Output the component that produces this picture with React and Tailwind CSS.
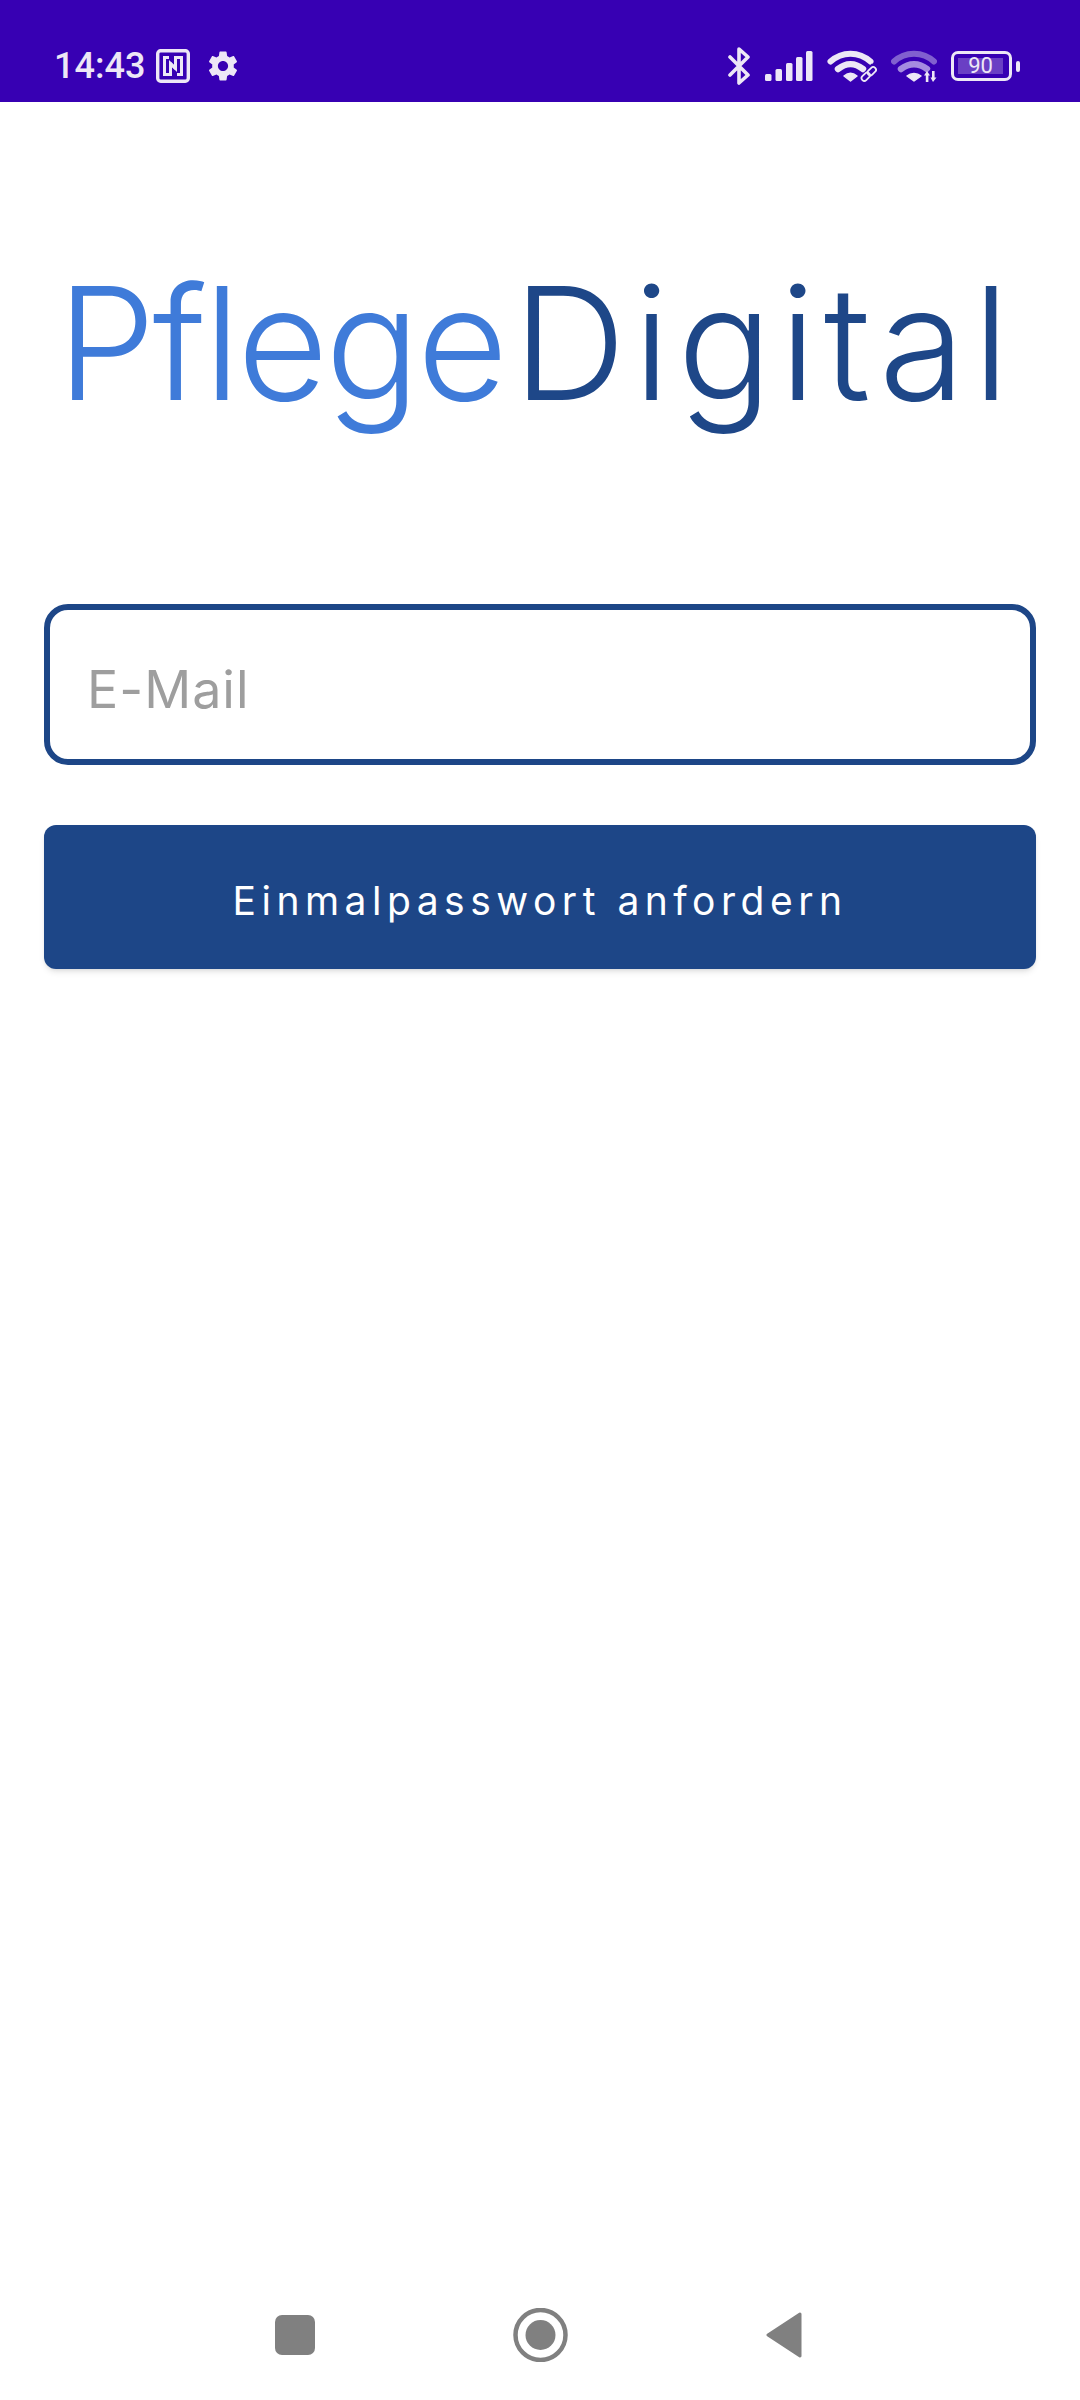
const statusColor = "#ede7f6";

function NfcIcon() {
    return (
        <svg width="34" height="34" viewBox="0 0 34 34" fill="none" stroke={statusColor} strokeWidth="3.4">
            <rect x="1.7" y="1.7" width="30.6" height="30.6" rx="3" />
            <path d="M13 8.5H8.5V25.5H14.5V14.5L20 20" strokeWidth="3" />
            <path d="M21 25.5H25.5V8.5H19.5V19.5L14 14" strokeWidth="3" />
        </svg>
    );
}

function GearIcon() {
    return (
        <svg width="36" height="36" viewBox="0 0 24 24" fill={statusColor}>
            <path d="M19.14 12.94c.04-.3.06-.61.06-.94 0-.32-.02-.64-.07-.94l2.03-1.58c.18-.14.23-.41.12-.61l-1.92-3.32c-.12-.22-.37-.29-.59-.22l-2.39.96c-.5-.38-1.03-.7-1.62-.94l-.36-2.54c-.04-.24-.24-.41-.48-.41h-3.84c-.24 0-.43.17-.47.41l-.36 2.54c-.59.24-1.13.57-1.62.94l-2.39-.96c-.22-.08-.47 0-.59.22L2.74 8.87c-.12.21-.08.47.12.61l2.03 1.58c-.05.3-.09.63-.09.94s.02.64.07.94l-2.03 1.58c-.18.14-.23.41-.12.61l1.92 3.32c.12.22.37.29.59.22l2.39-.96c.5.38 1.03.7 1.62.94l.36 2.54c.05.24.24.41.48.41h3.84c.24 0 .44-.17.47-.41l.36-2.54c.59-.24 1.13-.56 1.62-.94l2.39.96c.22.08.47 0 .59-.22l1.92-3.32c.12-.22.07-.47-.12-.61l-2.01-1.58zM12 15.4c-1.87 0-3.4-1.53-3.4-3.4s1.53-3.4 3.4-3.4 3.4 1.53 3.4 3.4-1.53 3.4-3.4 3.4z" />
        </svg>
    );
}

function BluetoothIcon() {
    return (
        <svg width="24" height="38" viewBox="0 0 24 38" fill="none" stroke={statusColor} strokeWidth="3.6" strokeLinecap="round" strokeLinejoin="round">
            <path d="M3 10 21 28 12 36V2L21 10 3 28" />
        </svg>
    );
}

function SignalIcon() {
    const bars = [
        { x: 0, y: 23 },
        { x: 10.5, y: 18 },
        { x: 21, y: 12 },
        { x: 31, y: 6 },
        { x: 41, y: 0 },
    ];
    return (
        <svg width="48" height="30" viewBox="0 0 48 30" fill={statusColor}>
            {bars.map((b) => (
                <rect key={b.x} x={b.x} y={b.y} width="6.5" height={30 - b.y} rx="1.5" />
            ))}
        </svg>
    );
}

function WifiLinkIcon() {
    return (
        <svg width="50" height="34" viewBox="0 0 50 34" fill="none">
            <path d="M3.5 12.5C15 2 32 2 43.5 12.5" stroke={statusColor} strokeWidth="6" strokeLinecap="round" />
            <path d="M11 20C19 13.5 28 13.5 36 20" stroke={statusColor} strokeWidth="6.5" strokeLinecap="round" />
            <path d="M23.5 32 17 27C21 23.5 26 23.5 30 27Z" fill={statusColor} stroke={statusColor} strokeWidth="1.5" strokeLinejoin="round" />
            <path d="M35 34 49 18" stroke="#3700b3" strokeWidth="11" />
            <g stroke={statusColor} strokeWidth="1.8" fill="none">
                <rect x="34" y="25" width="9.5" height="5.5" rx="2.7" transform="rotate(-45 38.7 27.7)" />
                <rect x="40" y="19.5" width="9.5" height="5.5" rx="2.7" transform="rotate(-45 44.7 22.2)" />
            </g>
        </svg>
    );
}

function WifiDataIcon() {
    return (
        <svg width="46" height="35" viewBox="0 0 46 35" fill="none">
            <path d="M3 12.5C14 2 32 2 43 12.5" stroke="#8160cf" strokeWidth="6" strokeLinecap="round" />
            <path d="M10 20C18 13.5 28 13.5 36 20" stroke="#a58be0" strokeWidth="6.5" strokeLinecap="round" />
            <path d="M23 32 16 27C20 23.5 26 23.5 30 27Z" fill={statusColor} stroke={statusColor} strokeWidth="1.5" strokeLinejoin="round" />
            <path d="M33 34 47 20" stroke="#3700b3" strokeWidth="10" />
            <path d="M36 22 39 26.5H37.4V33H34.8V26.5H33Z" fill={statusColor} />
            <path d="M42 33 39.5 28.5H41V22H43.6V28.5H45.5Z" fill={statusColor} />
        </svg>
    );
}

function BatteryIcon() {
    return (
        <div className="flex items-center gap-[4px]">
            <div className="h-[30px] w-[61px] rounded-[7px] border-[3px] border-[#ede7f6] p-[4px]">
                <div className="flex h-full w-[45px] items-center justify-center bg-[#6a3fc4] font-['Roboto',sans-serif] text-[22px] leading-none text-[#ede7f6]">
                    90
                </div>
            </div>
            <div className="h-[11px] w-[4px] rounded-[2px] bg-[#ede7f6]" />
        </div>
    );
}

function StatusBar() {
    return (
        <div className="flex h-[102px] items-center justify-between bg-[#3700b3] pl-[54px] pr-[60px] pt-[30px]">
            <div className="flex items-center">
                <span className="font-['Roboto',sans-serif] text-[36px] font-medium leading-none text-[#ede7f6]">14:43</span>
                <div className="ml-[11px]">
                    <NfcIcon />
                </div>
                <div className="ml-[15px]">
                    <GearIcon />
                </div>
            </div>
            <div className="flex items-center gap-[14px]">
                <BluetoothIcon />
                <SignalIcon />
                <WifiLinkIcon />
                <WifiDataIcon />
                <BatteryIcon />
            </div>
        </div>
    );
}

function NavBar() {
    return (
        <div className="flex h-[130px] items-center gap-[198px] pl-[275px]">
            <div className="h-[40px] w-[40px] rounded-[7px] bg-[#808080]" />
            <svg width="55" height="54" viewBox="0 0 55 54">
                <circle cx="27.5" cy="27" r="25" fill="none" stroke="#808080" strokeWidth="4.5" />
                <circle cx="27.5" cy="27" r="15" fill="#808080" />
            </svg>
            <svg width="36" height="46" viewBox="0 0 36 46">
                <path d="M34 2 2 23 34 44Z" fill="#808080" stroke="#808080" strokeWidth="3" strokeLinejoin="round" />
            </svg>
        </div>
    );
}

export default function App() {
    return (
        <div className="flex h-[2400px] w-[1080px] flex-col bg-white">
            <StatusBar />
            <main className="flex-1 px-[44px]">
                <h1 className="mt-[161px] h-[160px] pr-[6px] text-center font-['Inter',sans-serif] text-[157px] font-light leading-[160px]">
                    <span className="tracking-[-3px] text-[#3f7bd9]">Pflege</span>
                    <span className="ml-[8px] tracking-[7.5px] text-[#1e4788]">Digital</span>
                </h1>
                <input
                    type="text"
                    placeholder="E-Mail"
                    className="mt-[181px] block h-[161px] w-full rounded-[24px] border-[6px] border-[#1d4687] bg-white px-[37px] pt-[9px] font-['Inter',sans-serif] text-[52px] font-normal tracking-[1px] outline-none placeholder:text-[#9e9e9e]"
                />
                <button className="mt-[60px] block h-[144px] w-full rounded-[12px] bg-[#1d4687] pt-[8px] font-['Inter',sans-serif] text-[39px] font-normal tracking-[5.5px] text-white shadow-md">
                    Einmalpasswort anfordern
                </button>
            </main>
            <NavBar />
        </div>
    );
}
